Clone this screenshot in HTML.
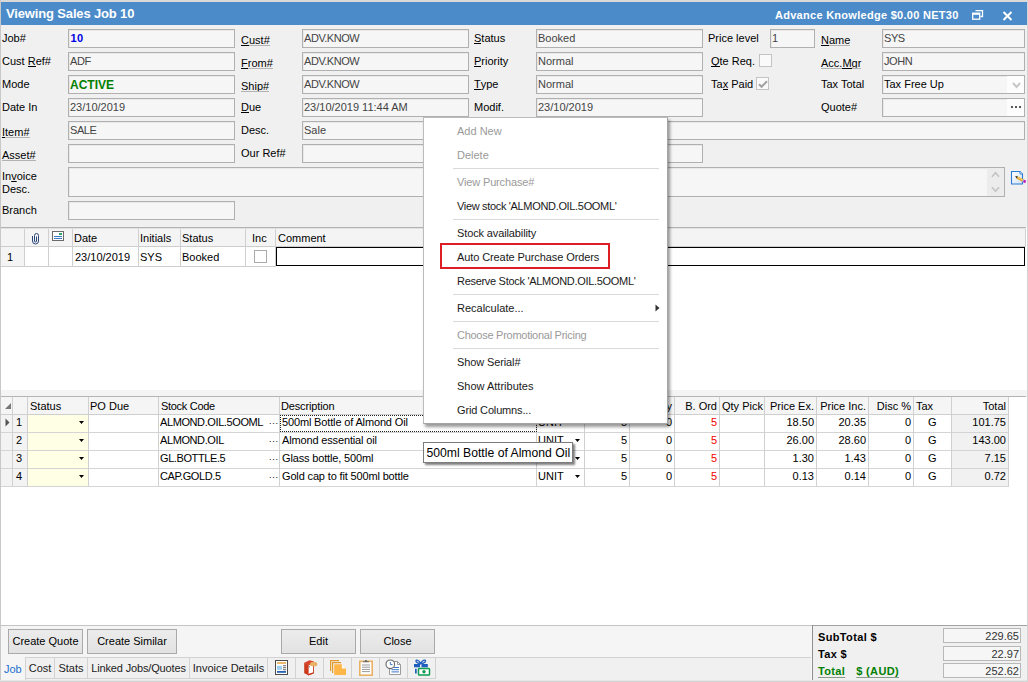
<!DOCTYPE html>
<html>
<head>
<meta charset="utf-8">
<title>Viewing Sales Job 10</title>
<style>
html,body{margin:0;padding:0;}
body{width:1028px;height:682px;overflow:hidden;background:#f0f0f0;position:relative;font-family:"Liberation Sans",sans-serif;font-size:11px;color:#000;}
.a{position:absolute;white-space:nowrap;}
.lbl{position:absolute;white-space:nowrap;height:19px;line-height:19px;font-size:11px;color:#000;}
.lnk{margin-top:2px;}
.lk{display:inline-block;position:relative;}
.lk::after{content:"";position:absolute;left:0;right:0;top:14px;height:1px;background:#b2b2b2;}
.k{display:inline-block;position:relative;}
.k::after{content:"";position:absolute;left:0;right:0;top:14px;height:1px;background:#000;z-index:1;}
u{text-decoration:underline;text-decoration-skip-ink:none;}
.box{position:absolute;box-sizing:border-box;height:19px;border:1px solid #b0b0b0;background:#f6f6f6;line-height:16px;padding-left:1px;color:#444;white-space:nowrap;overflow:hidden;box-shadow:inset 1px 1px 0 #e9e9e9;}
.chk{position:absolute;box-sizing:border-box;width:13px;height:13px;border:1px solid #c4c4c4;background:#fafafa;}
/* title */
#topstrip{left:0;top:0;width:1028px;height:2px;background:#d9d9d9;}
#leftstrip{left:0;top:0;width:1px;height:682px;background:#c8c8c8;}
#title{left:1px;top:2px;width:1026px;height:23px;background:#4b8bc9;}
#title .t1{left:5px;top:0;line-height:23px;font-size:13px;font-weight:bold;color:#fff;letter-spacing:-0.15px;}
#title .t2{left:774px;top:0;line-height:26px;font-size:11px;font-weight:bold;color:#fff;letter-spacing:0.28px;}
/* grids */
.hline{position:absolute;height:1px;background:#c6c6c6;}
.vline{position:absolute;width:1px;background:#d0d0d0;}
.cell{position:absolute;white-space:nowrap;height:18px;line-height:17px;}
.r{text-align:right;}
/* menu */
#menu{left:423px;top:117px;width:245px;height:307px;box-sizing:border-box;background:#fff;border:1px solid #bcbcbc;border-right-color:#a4a4a4;border-bottom-color:#a4a4a4;box-shadow:2px 3px 3px rgba(0,0,0,0.4);}
#menu .mi{position:absolute;left:33px;height:24px;line-height:25px;white-space:nowrap;color:#1a1a1a;}
#menu .dis{color:#9a9a9a;}
#menu .sep{position:absolute;left:29px;width:206px;height:1px;background:#d9d9d9;}
#tip{left:423px;top:442px;width:150px;height:21px;box-sizing:border-box;background:#fff;border:1px solid #7c7c7c;box-shadow:2px 2px 2px rgba(0,0,0,0.5);font-size:12.2px;line-height:20px;padding-left:2.500px;}
.btn{position:absolute;box-sizing:border-box;height:25px;border:1px solid #a9a9a9;background:linear-gradient(#ececec,#e2e2e2);text-align:center;line-height:23px;top:629px;}
.tab{position:absolute;box-sizing:border-box;top:657px;height:22px;border:1px solid #d2d2d2;border-left:none;background:#f0f0f0;text-align:center;line-height:20px;color:#222;}
.tbox{position:absolute;box-sizing:border-box;left:943px;width:78px;height:15px;border:1px solid #b8b8b8;background:#f6f6f6;text-align:right;padding-right:1px;line-height:15px;color:#333;}
.bl{position:absolute;left:818px;font-weight:bold;white-space:nowrap;line-height:15px;letter-spacing:0.35px;}
</style>
</head>
<body>
<div class="a" id="topstrip"></div>
<div class="a" id="leftstrip"></div>
<div class="a" id="title">
  <div class="a t1">Viewing Sales Job 10</div>
  <div class="a t2">Advance Knowledge $0.00 NET30</div>
  <svg class="a" style="left:971px;top:8px" width="12" height="11" viewBox="0 0 12 11"><path d="M3.5 0.5h7v6h-2" fill="none" stroke="#fff" stroke-width="1.3"/><rect x="0.7" y="3.2" width="7" height="6" fill="#4b8bc9" stroke="#fff" stroke-width="1.3"/><rect x="0.7" y="3.2" width="7" height="1.6" fill="#fff"/></svg>
  <svg class="a" style="left:1001px;top:9px" width="11" height="10" viewBox="0 0 11 10"><path d="M1.5 1l8 8M9.5 1l-8 8" stroke="#fff" stroke-width="2" fill="none"/></svg>
</div>

<!-- FORM -->
<div id="form">
<!-- row 1 -->
<div class="lbl" style="left:2px;top:29px">Job#</div>
<div class="box" style="left:68px;top:29px;width:167px;color:#0000e6;font-weight:bold;padding-left:1.500px;letter-spacing:0.4px">10</div>
<div class="lbl lnk" style="left:241px;top:29px"><span class="lk"><span class="k">C</span>ust#</span></div>
<div class="box" style="letter-spacing:-0.45px;left:302px;top:29px;width:167px">ADV.KNOW</div>
<div class="lbl" style="left:474px;top:29px"><span class="k">S</span>tatus</div>
<div class="box" style="left:536px;top:29px;width:167px">Booked</div>
<div class="lbl" style="left:708px;top:29px">Price level</div>
<div class="box" style="left:770px;top:29px;width:45px">1</div>
<div class="lbl lnk" style="left:821px;top:29px"><span class="lk"><span class="k">N</span>ame</span></div>
<div class="box" style="letter-spacing:-0.45px;left:882px;top:29px;width:143px">SYS</div>
<!-- row 2 -->
<div class="lbl" style="left:2px;top:52px">Cust <span class="k">R</span>ef#</div>
<div class="box" style="letter-spacing:-0.45px;left:68px;top:52px;width:167px">ADF</div>
<div class="lbl lnk" style="left:241px;top:52px"><span class="lk"><span class="k">F</span>rom#</span></div>
<div class="box" style="letter-spacing:-0.45px;left:302px;top:52px;width:167px">ADV.KNOW</div>
<div class="lbl" style="left:474px;top:52px"><span class="k">P</span>riority</div>
<div class="box" style="left:536px;top:52px;width:167px">Normal</div>
<div class="lbl" style="left:711px;top:52px"><span class="k">Q</span>te Req.</div>
<div class="chk" style="left:759px;top:54px"></div>
<div class="lbl lnk" style="left:821px;top:52px"><span class="lk">Acc.<span class="k">M</span>gr</span></div>
<div class="box" style="letter-spacing:-0.45px;left:882px;top:52px;width:143px">JOHN</div>
<!-- row 3 -->
<div class="lbl" style="left:2px;top:75px">Mode</div>
<div class="box" style="left:68px;top:75px;width:167px;color:#008000;font-weight:bold;font-size:12px;padding-left:1px;line-height:18px">ACTIVE</div>
<div class="lbl lnk" style="left:241px;top:75px"><span class="lk">Ship#</span></div>
<div class="box" style="letter-spacing:-0.45px;left:302px;top:75px;width:167px">ADV.KNOW</div>
<div class="lbl" style="left:474px;top:75px"><span class="k">T</span>ype</div>
<div class="box" style="left:536px;top:75px;width:167px">Normal</div>
<div class="lbl" style="left:711px;top:75px">Ta<span class="k">x</span> Paid</div>
<div class="chk" style="left:756px;top:77px"><svg class="a" style="left:1px;top:1px" width="10" height="10" viewBox="0 0 10 10"><path d="M1 5.2l2.6 2.6L9 2.2" stroke="#a2a2a2" stroke-width="2" fill="none"/></svg></div>
<div class="lbl" style="left:821px;top:75px">Tax Total</div>
<div class="box" style="left:882px;top:75px;width:143px;color:#000">Tax Free Up<div class="a" style="right:0;top:0;width:17px;height:17px;background:#fdfdfd"><svg class="a" style="left:5px;top:6px" width="9" height="7" viewBox="0 0 9 7"><path d="M1 1l3.500 4L8 1" stroke="#c6c6c6" stroke-width="1.900" fill="none"/></svg></div></div>
<!-- row 4 -->
<div class="lbl" style="left:2px;top:98px">Date In</div>
<div class="box" style="left:68px;top:98px;width:167px">23/10/2019</div>
<div class="lbl" style="left:241px;top:98px"><span class="k">D</span>ue</div>
<div class="box" style="left:302px;top:98px;width:167px">23/10/2019 11:44 AM</div>
<div class="lbl" style="left:474px;top:98px">Modif.</div>
<div class="box" style="left:536px;top:98px;width:167px">23/10/2019</div>
<div class="lbl" style="left:821px;top:98px">Quote#</div>
<div class="box" style="left:882px;top:98px;width:143px"><div class="a" style="right:0;top:0;width:17px;height:17px;background:#fdfdfd"><svg class="a" style="left:4px;top:7px" width="10" height="2" viewBox="0 0 10 2"><rect x="0" y="0" width="2" height="2" fill="#585858"/><rect x="4" y="0" width="2" height="2" fill="#585858"/><rect x="8" y="0" width="2" height="2" fill="#585858"/></svg></div></div>
<!-- row 5 -->
<div class="lbl lnk" style="left:2px;top:121px"><span class="lk"><span class="k">I</span>tem#</span></div>
<div class="box" style="letter-spacing:-0.45px;left:68px;top:121px;width:167px">SALE</div>
<div class="lbl" style="left:241px;top:121px">Desc.</div>
<div class="box" style="left:302px;top:121px;width:723px">Sale</div>
<!-- row 6 -->
<div class="lbl lnk" style="left:2px;top:144px"><span class="lk">Asset#</span></div>
<div class="box" style="left:68px;top:144px;width:167px"></div>
<div class="lbl" style="left:241px;top:144px">Our Ref#</div>
<div class="box" style="left:302px;top:144px;width:167px"></div>
<div class="box" style="left:536px;top:144px;width:167px"></div>
<!-- invoice desc -->
<div class="lbl" style="left:2px;top:167px;line-height:13px;height:26px;white-space:normal;width:50px;margin-top:3px">In<u>v</u>oice Desc.</div>
<div class="box" style="left:68px;top:167px;width:937px;height:30px">
  <div class="a" style="right:0;top:0;width:17px;height:28px;background:#ececec">
    <svg class="a" style="left:4px;top:3px" width="9" height="7" viewBox="0 0 9 7"><path d="M1 5.800l3.500-4L8 5.800" stroke="#c4c4c4" stroke-width="1.700" fill="none"/></svg>
    <svg class="a" style="left:4px;top:18px" width="9" height="7" viewBox="0 0 9 7"><path d="M1 1.200l3.500 4L8 1.200" stroke="#c4c4c4" stroke-width="1.700" fill="none"/></svg>
  </div>
</div>
<svg class="a" style="left:1010px;top:170px" width="18" height="16" viewBox="0 0 18 16"><defs><linearGradient id="dg" x1="0" y1="0" x2="1" y2="1"><stop offset="0" stop-color="#fff"/><stop offset="1" stop-color="#cfe2f5"/></linearGradient></defs><path d="M1.500 1.500h8.500l2.500 2.500v10h-11z" fill="url(#dg)" stroke="#2e7bd6" stroke-width="1.100"/><path d="M10 1.500v2.500h2.500" fill="#fff" stroke="#2e7bd6" stroke-width="0.900"/><path d="M5.500 6.200l2.300 0.300 6.500 3.200-1.200 2.300-6.300-3.300z" fill="#e9a020"/><path d="M7.500 6.800l6.300 3.100-0.400 0.900-6.400-3.200z" fill="#ffd872"/><path d="M5.200 6l2.600 0.500-1 2z" fill="#222"/><path d="M13.800 9.500l2.400 1.200-1 2.600-2.500-1.300z" fill="#c21fc0"/><path d="M13.300 9.300l0.900 0.400-1.200 2.400-0.800-0.400z" fill="#7fc4e8"/></svg>
<div class="lbl" style="left:2px;top:201px">Branch</div>
<div class="box" style="left:68px;top:201px;width:167px"></div>
</div>

<!-- COMMENT GRID -->
<div id="cgrid">
<div class="a" style="left:1px;top:247px;width:1027px;height:143px;background:#fff"></div>
<div class="a" style="left:1px;top:228px;width:1025px;height:18px;background:#f4f4f4"></div>
<div class="a" style="left:1px;top:247px;width:23px;height:19px;background:#f4f4f4"></div>
<div class="a" style="left:1026px;top:227px;width:1px;height:163px;background:#fff"></div>
<div class="hline" style="left:1px;top:227px;width:1025px;background:#b2b2b2"></div>
<div class="hline" style="left:1px;top:228px;width:1025px;background:#e2e2e2"></div>
<div class="hline" style="left:1px;top:246px;width:1025px;background:#cdcdcd"></div>
<div class="hline" style="left:1px;top:266px;width:275px;background:#cdcdcd"></div>
<div class="vline" style="left:24px;top:229px;height:38px"></div>
<div class="vline" style="left:48px;top:229px;height:38px"></div>
<div class="vline" style="left:72px;top:229px;height:38px"></div>
<div class="vline" style="left:138px;top:229px;height:38px"></div>
<div class="vline" style="left:180px;top:229px;height:38px"></div>
<div class="vline" style="left:245px;top:229px;height:38px"></div>
<div class="vline" style="left:275px;top:229px;height:38px"></div>
<div class="vline" style="left:1025px;top:229px;height:18px"></div>
<svg class="a" style="left:32px;top:232px" width="8" height="13" viewBox="0 0 8 13"><path d="M0.500 4v5a3 3 0 0 0 6 0V3.500a2 2 0 0 0-4 0V9a1 1 0 0 0 2 0V4.500" fill="none" stroke="#2a4677" stroke-width="1"/></svg>
<svg class="a" style="left:52px;top:231px" width="12" height="10" viewBox="0 0 12 10"><rect x="0.500" y="0.500" width="11" height="9" fill="#fff" stroke="#6a6a6a"/><rect x="7" y="2" width="3" height="2" fill="#2fa86a"/><rect x="2" y="5" width="8" height="1" fill="#3b78c4"/><rect x="2" y="7" width="8" height="1" fill="#3b78c4"/></svg>
<div class="cell" style="left:74px;top:230px">Date</div>
<div class="cell" style="left:140px;top:230px">Initials</div>
<div class="cell" style="left:182px;top:230px">Status</div>
<div class="cell" style="left:252px;top:230px">Inc</div>
<div class="cell" style="left:278px;top:230px">Comment</div>
<div class="cell" style="left:7px;top:249px">1</div>
<div class="cell" style="left:75px;top:249px">23/10/2019</div>
<div class="cell" style="left:140px;top:249px">SYS</div>
<div class="cell" style="left:182px;top:249px">Booked</div>
<div class="chk" style="left:254px;top:250px;background:#fff;border-color:#ababab"></div>
<div class="a" style="left:276px;top:247px;width:749px;height:19px;box-sizing:border-box;border:1px solid #000;background:#fff"></div>
</div>

<!-- ITEMS GRID -->
<div id="igrid">
<div class="a" style="left:1px;top:390px;width:1026px;height:6px;background:#f4f4f4"></div>
<div class="a" style="left:1px;top:397px;width:1027px;height:229px;background:#fff"></div>
<div class="a" style="left:1px;top:397px;width:1007px;height:18px;background:#f5f5f5"></div>
<div class="a" style="left:1px;top:414px;width:27px;height:72px;background:#f3f3f3"></div>
<div class="a" style="left:28px;top:415px;width:60px;height:71px;background:#ffffe6"></div>
<div class="a" style="left:952px;top:415px;width:56px;height:71px;background:#f1f1f1"></div>
<div class="hline" style="left:1px;top:396px;width:1025px;background:#b4b4b4"></div>
<div class="hline" style="left:1px;top:414px;width:1008px;background:#cfcfcf"></div>
<div class="hline" style="left:1px;top:432px;width:1008px;background:#d4d4d4"></div>
<div class="hline" style="left:1px;top:450px;width:1008px;background:#d4d4d4"></div>
<div class="hline" style="left:1px;top:468px;width:1008px;background:#d4d4d4"></div>
<div class="hline" style="left:1px;top:486px;width:1008px;background:#d4d4d4"></div>
<div class="vline" style="left:12px;top:397px;height:89px"></div>
<div class="vline" style="left:27px;top:397px;height:89px"></div>
<div class="vline" style="left:88px;top:397px;height:89px"></div>
<div class="vline" style="left:158px;top:397px;height:89px"></div>
<div class="vline" style="left:279px;top:397px;height:89px"></div>
<div class="vline" style="left:536px;top:397px;height:89px"></div>
<div class="vline" style="left:584px;top:397px;height:89px"></div>
<div class="vline" style="left:629px;top:397px;height:89px"></div>
<div class="vline" style="left:674px;top:397px;height:89px"></div>
<div class="vline" style="left:719px;top:397px;height:89px"></div>
<div class="vline" style="left:764px;top:397px;height:89px"></div>
<div class="vline" style="left:816px;top:397px;height:89px"></div>
<div class="vline" style="left:868px;top:397px;height:89px"></div>
<div class="vline" style="left:913px;top:397px;height:89px"></div>
<div class="vline" style="left:951px;top:397px;height:89px"></div>
<div class="vline" style="left:1008px;top:397px;height:89px"></div>
<svg class="a" style="left:4px;top:402px" width="8" height="8" viewBox="0 0 8 8"><path d="M7 1v6H1z" fill="#777"/></svg>
<svg class="a" style="left:5px;top:418px" width="5" height="9" viewBox="0 0 5 9"><path d="M0.500 0.500l4 4-4 4z" fill="#555"/></svg>
<div class="cell" style="left:30px;top:398px">Status</div>
<div class="cell" style="left:90px;top:398px">PO Due</div>
<div class="cell" style="left:161px;top:398px;letter-spacing:-0.3px">Stock Code</div>
<div class="cell" style="left:281px;top:398px;letter-spacing:-0.15px">Description</div>
<div class="cell r" style="left:675px;top:398px;width:42px">B. Ord</div>
<div class="cell" style="left:722px;top:398px">Qty Pick</div>
<div class="cell r" style="left:765px;top:398px;width:49px">Price Ex.</div>
<div class="cell r" style="left:817px;top:398px;width:49px">Price Inc.</div>
<div class="cell r" style="left:869px;top:398px;width:42px">Disc %</div>
<div class="cell" style="left:916px;top:398px">Tax</div>
<div class="cell r" style="left:952px;top:398px;width:54px">Total</div>
<div class="cell r" style="left:630px;top:398px;width:42px">Qty</div>
</div>
<div class="a" style="left:280px;top:415px;width:257px;height:17px;box-sizing:border-box;border:1px dotted #222"></div>
<!--ROWS-->
<div id="rows">
<div class="cell" style="left:16px;top:414px">1</div>
<svg class="a" style="left:79px;top:421px" width="5" height="3" viewBox="0 0 5 3"><path d="M0 0h5l-2.500 3z" fill="#000"/></svg>
<div class="cell" style="left:160px;top:414px;letter-spacing:-0.4px">ALMOND.OIL.5OOML</div>
<div class="cell" style="left:269px;top:414px;font-size:9px;letter-spacing:0.7px;line-height:15px;color:#000">...</div>
<div class="cell" style="left:282px;top:414px;letter-spacing:-0.15px">500ml Bottle of Almond Oil</div>
<div class="cell" style="left:538px;top:414px">UNIT</div>
<svg class="a" style="left:575px;top:421px" width="5" height="3" viewBox="0 0 5 3"><path d="M0 0h5l-2.500 3z" fill="#000"/></svg>
<div class="cell r" style="left:585px;top:414px;width:42px">5</div>
<div class="cell r" style="left:630px;top:414px;width:42px">0</div>
<div class="cell r" style="left:675px;top:414px;width:42px;color:#f00000">5</div>
<div class="cell r" style="left:765px;top:414px;width:49px">18.50</div>
<div class="cell r" style="left:817px;top:414px;width:49px">20.35</div>
<div class="cell r" style="left:869px;top:414px;width:42px">0</div>
<div class="cell" style="left:928px;top:414px">G</div>
<div class="cell r" style="left:952px;top:414px;width:54px">101.75</div>
<div class="cell" style="left:16px;top:432px">2</div>
<svg class="a" style="left:79px;top:439px" width="5" height="3" viewBox="0 0 5 3"><path d="M0 0h5l-2.500 3z" fill="#000"/></svg>
<div class="cell" style="left:160px;top:432px;letter-spacing:-0.4px">ALMOND.OIL</div>
<div class="cell" style="left:269px;top:432px;font-size:9px;letter-spacing:0.7px;line-height:15px;color:#000">...</div>
<div class="cell" style="left:282px;top:432px;letter-spacing:-0.15px">Almond essential oil</div>
<div class="cell" style="left:538px;top:432px">UNIT</div>
<svg class="a" style="left:575px;top:439px" width="5" height="3" viewBox="0 0 5 3"><path d="M0 0h5l-2.500 3z" fill="#000"/></svg>
<div class="cell r" style="left:585px;top:432px;width:42px">5</div>
<div class="cell r" style="left:630px;top:432px;width:42px">0</div>
<div class="cell r" style="left:675px;top:432px;width:42px;color:#f00000">5</div>
<div class="cell r" style="left:765px;top:432px;width:49px">26.00</div>
<div class="cell r" style="left:817px;top:432px;width:49px">28.60</div>
<div class="cell r" style="left:869px;top:432px;width:42px">0</div>
<div class="cell" style="left:928px;top:432px">G</div>
<div class="cell r" style="left:952px;top:432px;width:54px">143.00</div>
<div class="cell" style="left:16px;top:450px">3</div>
<svg class="a" style="left:79px;top:457px" width="5" height="3" viewBox="0 0 5 3"><path d="M0 0h5l-2.500 3z" fill="#000"/></svg>
<div class="cell" style="left:160px;top:450px;letter-spacing:-0.4px">GL.BOTTLE.5</div>
<div class="cell" style="left:269px;top:450px;font-size:9px;letter-spacing:0.7px;line-height:15px;color:#000">...</div>
<div class="cell" style="left:282px;top:450px;letter-spacing:-0.15px">Glass bottle, 500ml</div>
<div class="cell" style="left:538px;top:450px">UNIT</div>
<svg class="a" style="left:575px;top:457px" width="5" height="3" viewBox="0 0 5 3"><path d="M0 0h5l-2.500 3z" fill="#000"/></svg>
<div class="cell r" style="left:585px;top:450px;width:42px">5</div>
<div class="cell r" style="left:630px;top:450px;width:42px">0</div>
<div class="cell r" style="left:675px;top:450px;width:42px;color:#f00000">5</div>
<div class="cell r" style="left:765px;top:450px;width:49px">1.30</div>
<div class="cell r" style="left:817px;top:450px;width:49px">1.43</div>
<div class="cell r" style="left:869px;top:450px;width:42px">0</div>
<div class="cell" style="left:928px;top:450px">G</div>
<div class="cell r" style="left:952px;top:450px;width:54px">7.15</div>
<div class="cell" style="left:16px;top:468px">4</div>
<svg class="a" style="left:79px;top:475px" width="5" height="3" viewBox="0 0 5 3"><path d="M0 0h5l-2.500 3z" fill="#000"/></svg>
<div class="cell" style="left:160px;top:468px;letter-spacing:-0.4px">CAP.GOLD.5</div>
<div class="cell" style="left:269px;top:468px;font-size:9px;letter-spacing:0.7px;line-height:15px;color:#000">...</div>
<div class="cell" style="left:282px;top:468px;letter-spacing:-0.15px">Gold cap to fit 500ml bottle</div>
<div class="cell" style="left:538px;top:468px">UNIT</div>
<svg class="a" style="left:575px;top:475px" width="5" height="3" viewBox="0 0 5 3"><path d="M0 0h5l-2.500 3z" fill="#000"/></svg>
<div class="cell r" style="left:585px;top:468px;width:42px">5</div>
<div class="cell r" style="left:630px;top:468px;width:42px">0</div>
<div class="cell r" style="left:675px;top:468px;width:42px;color:#f00000">5</div>
<div class="cell r" style="left:765px;top:468px;width:49px">0.13</div>
<div class="cell r" style="left:817px;top:468px;width:49px">0.14</div>
<div class="cell r" style="left:869px;top:468px;width:42px">0</div>
<div class="cell" style="left:928px;top:468px">G</div>
<div class="cell r" style="left:952px;top:468px;width:54px">0.72</div>
</div>
<!--/ROWS-->

<!-- BOTTOM -->
<div id="bottom">
<div class="a" style="left:1px;top:626px;width:1027px;height:56px;background:#f0f0f0"></div>
<div class="a" style="left:1px;top:626px;width:810px;height:31px;background:#f5f5f5"></div>
<div class="hline" style="left:1px;top:625px;width:811px;background:#c4c4c4"></div>
<div class="hline" style="left:812px;top:625px;width:215px;background:#a2a2a2"></div>
<div class="hline" style="left:1px;top:657px;width:811px;background:#d2d2d2"></div>
<div class="btn" style="left:8px;width:75px">Create Quote</div>
<div class="btn" style="left:87px;width:90px">Create Similar</div>
<div class="btn" style="left:281px;width:75px">Edit</div>
<div class="btn" style="left:360px;width:75px">Close</div>
<div class="a" style="left:1px;top:657px;width:25px;height:25px;background:#f5f5f5;border-right:1px solid #d2d2d2;box-sizing:border-box;color:#1c6fd0;line-height:24px;padding-left:3px">Job</div>
<div class="tab" style="left:26px;width:29px">Cost</div>
<div class="tab" style="left:55px;width:33px">Stats</div>
<div class="tab" style="left:88px;width:102px;letter-spacing:-0.15px">Linked Jobs/Quotes</div>
<div class="tab" style="left:190px;width:78px">Invoice Details</div>
<div class="tab" style="left:268px;width:28px"></div>
<div class="tab" style="left:296px;width:28px"></div>
<div class="tab" style="left:324px;width:28px"></div>
<div class="tab" style="left:352px;width:28px"></div>
<div class="tab" style="left:380px;width:28px"></div>
<div class="tab" style="left:408px;width:28px"></div>

<!-- tab icons -->
<svg class="a" style="left:275px;top:660px" width="13" height="15" viewBox="0 0 13 15"><rect x="0.5" y="0.500" width="12" height="14" fill="#fff" stroke="#4c4c4c"/><rect x="2" y="2.200" width="9" height="1.600" fill="#e9a94a"/><rect x="2" y="5.800" width="5" height="4" fill="#9ed0f0"/><rect x="8" y="5.200" width="3" height="1" fill="#666"/><rect x="8" y="7.200" width="3" height="1" fill="#666"/><rect x="8" y="9.200" width="3" height="1" fill="#666"/><rect x="2" y="11" width="9" height="1.800" fill="#2663b5"/></svg>
<svg class="a" style="left:303px;top:659px" width="16" height="17" viewBox="0 0 16 17"><path d="M1.200 3.800L6.500 1.200l4.500 1.300v2L5 6.500z" fill="#d8432a"/><path d="M1.200 3.800l3.800 2.200v10l-3.800-1.800z" fill="#cc3a1e"/><path d="M5.200 6l5.300-1.600v9.800L5.200 16z" fill="#fff" stroke="#cc3a1e" stroke-width="0.900"/><path d="M5 15l5.500-1.800v1.400L5 16.400z" fill="#cc3a1e"/><rect x="7" y="3" width="7.300" height="4.200" rx="2" fill="#e9b266"/><circle cx="6.300" cy="7.800" r="0.600" fill="#555"/></svg>
<svg class="a" style="left:330px;top:660px" width="17" height="16" viewBox="0 0 17 16"><path d="M0.600 11V0.600h8.500" fill="none" stroke="#e39a2c" stroke-width="1.200"/><path d="M2.600 13V2.600h8.500" fill="none" stroke="#e39a2c" stroke-width="1.200"/><path d="M4.200 4.200h7.500l4.300 4.300V15H4.200z" fill="#ffb648"/><path d="M11.900 4.200v4.200h4.200z" fill="#fff" opacity="0.950"/></svg>
<svg class="a" style="left:359px;top:659px" width="14" height="17" viewBox="0 0 14 17"><rect x="0.800" y="2.300" width="12.400" height="13.900" fill="#fff" stroke="#e8b264" stroke-width="1.600"/><path d="M4 3.300V2.200h1.800c0-1.600 2.400-1.600 2.400 0H10v1.100z" fill="#6a6a6a"/><rect x="3" y="5.500" width="8" height="1" fill="#999"/><rect x="3" y="7.700" width="8" height="1" fill="#999"/><rect x="3" y="9.900" width="8" height="1" fill="#999"/><rect x="3" y="12.100" width="8" height="1" fill="#999"/></svg>
<svg class="a" style="left:385px;top:659px" width="17" height="17" viewBox="0 0 17 17"><path d="M4.500 2.500h8l3 3v10h-11z" fill="#fff" stroke="#9a9a9a"/><path d="M12.500 2.500v3h3" fill="none" stroke="#9a9a9a"/><rect x="9" y="8" width="5" height="1" fill="#3c78c8"/><rect x="6.500" y="10.200" width="7.500" height="1" fill="#3c78c8"/><rect x="6.500" y="12.400" width="7.500" height="1" fill="#3c78c8"/><circle cx="5.300" cy="5.300" r="4.300" fill="#fff" stroke="#666" stroke-width="1.100"/><path d="M5.300 3v2.600h2.200" fill="none" stroke="#3c78c8" stroke-width="1"/></svg>
<svg class="a" style="left:413px;top:659px" width="18" height="17" viewBox="0 0 18 17"><path d="M3.500 1.200c1.600-0.600 3 1 4.200 3.200C8.900 2.200 10.300 0.600 12 1.200c1.300 0.600 0.300 3-4.300 3.700C3.200 4.200 2.200 1.800 3.500 1.200z" fill="none" stroke="#1f5fc0" stroke-width="1.300"/><rect x="1" y="5" width="6" height="3.300" fill="#1f5fc0"/><rect x="8.500" y="5" width="6.300" height="3.300" fill="#1f5fc0"/><rect x="2" y="9.800" width="1.700" height="4.700" fill="#1f5fc0"/><rect x="5.500" y="9.500" width="11" height="6.500" rx="0.800" fill="#fff" stroke="#0d9c50" stroke-width="1.500"/><circle cx="11" cy="12.750" r="1.700" fill="#0d9c50"/></svg>
<div class="a" style="left:811px;top:626px;width:1px;height:54px;background:#f8f8f8"></div><div class="a" style="left:812px;top:625px;width:1px;height:56px;background:#8f8f8f"></div>
<div class="bl" style="top:630px">SubTotal $</div>
<div class="bl" style="top:647px">Tax $</div>
<div class="bl" style="top:664px;color:#008000;text-decoration-color:#8fa08f"><u style="text-decoration-color:#8a9a8a;text-decoration-thickness:1px;text-underline-offset:2px">Total</u><span style="display:inline-block;width:11px"></span><u style="text-decoration-color:#8a9a8a;text-decoration-thickness:1px;text-underline-offset:2px">$ (AUD)</u></div>
<div class="tbox" style="top:628px">229.65</div>
<div class="tbox" style="top:646px">22.97</div>
<div class="tbox" style="top:663px">252.62</div>
</div>

<div class="a" style="left:0;top:680px;width:1028px;height:1px;background:#e4e4e4"></div><div class="a" style="left:0;top:681px;width:1028px;height:1px;background:#d4d4d4"></div><div class="a" style="left:1027px;top:0;width:1px;height:682px;background:#d4d4d4"></div>
<!-- MENU -->
<div class="a" id="menu">
<div class="mi dis" style="top:1px">Add New</div>
<div class="mi dis" style="top:25px">Delete</div>
<div class="sep" style="top:50px"></div>
<div class="mi dis" style="letter-spacing:-0.15px;top:52px">View Purchase#</div>
<div class="mi" style="letter-spacing:-0.33px;top:76px">View stock 'ALMOND.OIL.5OOML'</div>
<div class="sep" style="top:101px"></div>
<div class="mi" style="letter-spacing:-0.12px;top:103px">Stock availability</div>
<div class="mi" style="letter-spacing:-0.1px;top:127px">Auto Create Purchase Orders</div>
<div class="mi" style="letter-spacing:-0.3px;top:151px">Reserve Stock 'ALMOND.OIL.5OOML'</div>
<div class="sep" style="top:176px"></div>
<div class="mi" style="top:178px">Recalculate...</div>
<svg class="a" style="left:231px;top:186px" width="5" height="8" viewBox="0 0 5 8"><path d="M0.500 0.500l4 3.500-4 3.500z" fill="#333"/></svg>
<div class="sep" style="top:203px"></div>
<div class="mi dis" style="letter-spacing:-0.27px;top:205px">Choose Promotional Pricing</div>
<div class="sep" style="top:230px"></div>
<div class="mi" style="letter-spacing:-0.12px;top:232px">Show Serial#</div>
<div class="mi" style="top:256px">Show Attributes</div>
<div class="mi" style="letter-spacing:-0.15px;top:280px">Grid Columns...</div>
</div>
<div class="a" style="left:440px;top:243px;width:170px;height:26px;box-sizing:border-box;border:2px solid #dc1e25"></div>
<div class="a" id="tip">500ml Bottle of Almond Oil</div>
</body>
</html>
